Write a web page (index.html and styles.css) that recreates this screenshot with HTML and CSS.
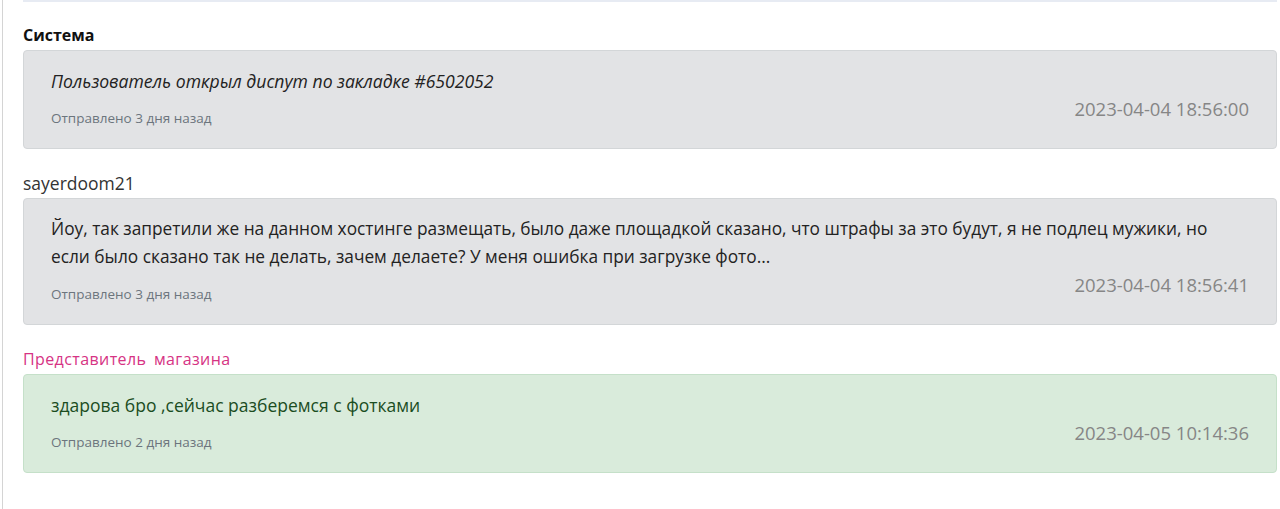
FILE: index.html
```html
<!DOCTYPE html>
<html lang="ru">
<head>
  <meta charset="UTF-8">
  <meta name="viewport" content="width=device-width, initial-scale=1.0">
  <title>Диспут</title>
  <link rel="stylesheet" href="styles.css">
</head>
<body>
  <div id="dispute">
    <div class="top-line"></div>
    <div class="messages">
      <div class="message">
        <div class="author author-system">Система</div>
        <div class="bubble bubble-grey">
          <p class="text text-system">Пользователь открыл диспут по закладке #6502052</p>
          <div class="meta">
            <span class="sent">Отправлено 3 дня назад</span>
            <span class="date">2023-04-04 18:56:00</span>
          </div>
        </div>
      </div>

      <div class="message">
        <div class="author">sayerdoom21</div>
        <div class="bubble bubble-grey">
          <p class="text">Йоу, так запретили же на данном хостинге размещать, было даже площадкой сказано, что штрафы за это будут, я не подлец мужики, но если было сказано так не делать, зачем делаете? У меня ошибка при загрузке фото...</p>
          <div class="meta">
            <span class="sent">Отправлено 3 дня назад</span>
            <span class="date">2023-04-04 18:56:41</span>
          </div>
        </div>
      </div>

      <div class="message">
        <div class="author author-shop">Представитель магазина</div>
        <div class="bubble bubble-green">
          <p class="text">здарова бро ,сейчас разберемся с фотками</p>
          <div class="meta">
            <span class="sent">Отправлено 2 дня назад</span>
            <span class="date">2023-04-05 10:14:36</span>
          </div>
        </div>
      </div>
    </div>
  </div>
</body>
</html>
```

FILE: styles.css
```css
body {
  margin: 0;
  padding: 0;
  background-color: #ffffff;
  font-family: "Open Sans", Roboto, sans-serif;
  color: #212529;
}

#dispute {
  margin-left: 2px;
  border-left: 1px solid #d4d4d4;
  min-height: 509px;
  padding: 0 3px 0 20px;
}

.top-line {
  height: 2px;
  background-color: #e7ebf3;
}

.messages {
  display: flex;
  flex-direction: column;
  gap: 22px;
  padding-top: 21px;
}

.author {
  font-size: 17.5px;
  line-height: 24px;
  color: #333333;
  margin-bottom: 3px;
}

.author-system {
  font-size: 16px;
  font-weight: bold;
  color: #111111;
}

.author-shop {
  color: #d63384;
  font-size: 16px;
  letter-spacing: 0.4px;
  word-spacing: 3px;
}

.bubble {
  border: 1px solid #d3d6d8;
  border-radius: 4px;
  padding: 16px 27px 20px 27px;
}

.bubble-grey {
  background-color: #e2e3e5;
}

.bubble-green {
  background-color: #d9ebdb;
  border-color: #c5e0c9;
}

.text {
  margin: 0;
  font-size: 17.3px;
  line-height: 28px;
  color: #222222;
}

.text-system {
  font-style: italic;
  font-size: 17.6px;
}

.bubble-green .text {
  color: #1b4d1f;
  font-size: 17.5px;
}

.meta {
  display: flex;
  justify-content: space-between;
  align-items: flex-start;
}

.sent {
  padding-top: 13px;
  font-size: 13.5px;
  line-height: 20px;
  color: #6c757d;
}

.date {
  font-size: 18.5px;
  line-height: 28px;
  color: #868686;
}
```
